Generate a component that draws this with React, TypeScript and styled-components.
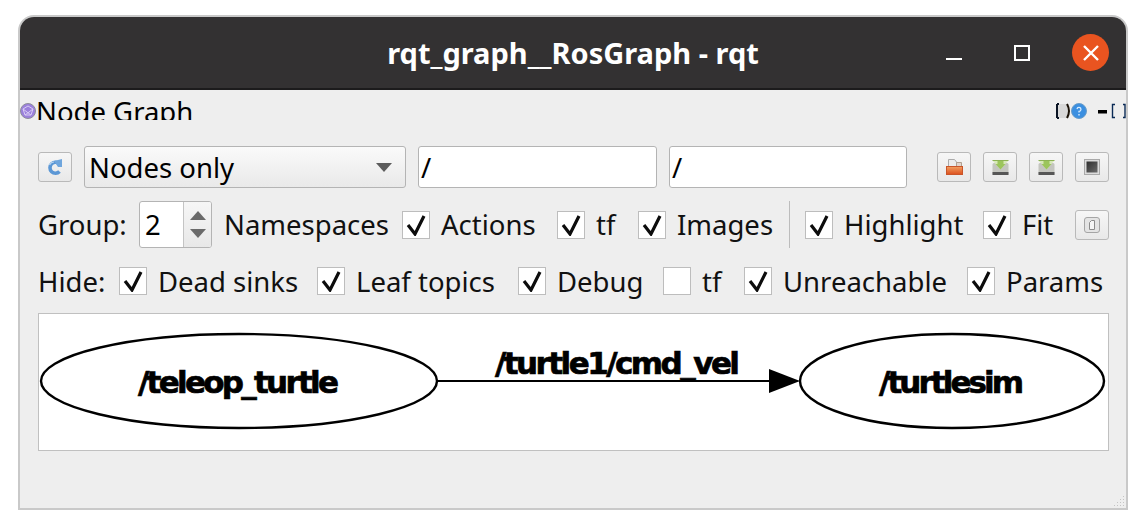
import React from "react";
import styled, { createGlobalStyle } from "styled-components";

const GlobalStyle = createGlobalStyle`
  html, body {
    margin: 0;
    padding: 0;
    background: #fff;
  }
  body {
    width: 1147px;
    height: 528px;
    overflow: hidden;
    font-family: "Noto Sans", "Liberation Sans", sans-serif;
  }
`;

const Page = styled.div`
  padding: 15px 0 0 18px;
`;

const Window = styled.div`
  position: relative;
  width: 1110px;
  height: 495px;
  box-sizing: border-box;
  border: 2px solid #c9c9c9;
  border-radius: 16px 16px 0 0;
  background: #eeeeee;
  overflow: hidden;
  display: flex;
  flex-direction: column;
`;

const TitleBar = styled.div`
  height: 73px;
  flex: none;
  box-sizing: border-box;
  background: #333132;
  border-bottom: 2px solid #1c1b1c;
  display: grid;
  grid-template-columns: 1fr auto 1fr;
  align-items: center;
`;

const Title = styled.div`
  grid-column: 2;
  color: #fff;
  font-size: 29px;
  font-weight: 700;
  white-space: nowrap;
`;

const WindowControls = styled.div`
  grid-column: 3;
  justify-self: end;
  display: flex;
  align-items: center;
  gap: 30px;
  padding-right: 17px;
`;

const MinIcon = styled.div`
  width: 16px;
  height: 2px;
  background: #fff;
  margin: 12px 22px 0 0;
`;

const MaxIcon = styled.div`
  width: 16px;
  height: 16px;
  box-sizing: border-box;
  border: 2px solid #fff;
  margin-right: 12px;
`;

const CloseButton = styled.div`
  width: 37px;
  height: 37px;
  border-radius: 50%;
  background: #e95420;
  display: flex;
  align-items: center;
  justify-content: center;
`;

const DockTitle = styled.div`
  height: 30px;
  flex: none;
  overflow: hidden;
  display: flex;
  align-items: flex-start;
  justify-content: space-between;
  color: #000;
`;

const DockName = styled.div`
  display: flex;
  align-items: flex-start;
  font-size: 27.5px;
  line-height: 38px;
  margin-top: 3px;
  svg {
    margin: 10px 0 0 0;
  }
`;

const DockButtons = styled.div`
  display: flex;
  align-items: center;
  margin-top: 13px;
`;

const Body = styled.div`
  flex: 1;
  padding: 26px 17px 0 18px;
  display: flex;
  flex-direction: column;
`;

const Row = styled.div<{ $h: number; $mt: number }>`
  display: flex;
  align-items: center;
  height: ${(p) => p.$h}px;
  margin-top: ${(p) => p.$mt}px;
  flex: none;
  font-size: 27.5px;
  color: #111;
  white-space: nowrap;
`;

const ToolButton = styled.div<{ $mr?: number }>`
  width: 34px;
  height: 30px;
  flex: none;
  box-sizing: border-box;
  border: 1px solid #b9b9b9;
  border-radius: 3px;
  background: linear-gradient(#f6f6f6, #e8e8e8);
  margin-right: ${(p) => p.$mr ?? 0}px;
  display: flex;
  align-items: center;
  justify-content: center;
`;

const Combo = styled.div`
  width: 322px;
  height: 42px;
  flex: none;
  box-sizing: border-box;
  margin: 0 12px;
  padding: 0 13px 0 4px;
  border: 1px solid #b4b4b4;
  border-radius: 3px;
  background: linear-gradient(#fafafa, #e9e9e9);
  display: flex;
  align-items: center;
  justify-content: space-between;
  color: #000;
`;

const ComboArrow = styled.div`
  width: 0;
  height: 0;
  border-left: 8px solid transparent;
  border-right: 8px solid transparent;
  border-top: 9px solid #5c5c5c;
`;

const TextField = styled.div<{ $w: number; $mr: number }>`
  width: ${(p) => p.$w}px;
  height: 42px;
  flex: none;
  box-sizing: border-box;
  margin-right: ${(p) => p.$mr}px;
  padding-left: 2px;
  border: 1px solid #b4b4b4;
  border-radius: 3px;
  background: #fff;
  color: #000;
  display: flex;
  align-items: center;
`;

const ToolGroup = styled.div`
  display: flex;
  gap: 12px;
`;

const Label = styled.div<{ $w: number }>`
  width: ${(p) => p.$w}px;
  flex: none;
`;

const Spin = styled.div`
  width: 73px;
  height: 47px;
  flex: none;
  box-sizing: border-box;
  margin-right: 12px;
  border: 1px solid #b4b4b4;
  border-radius: 3px;
  background: #fff;
  display: flex;
  overflow: hidden;
`;

const SpinValue = styled.div`
  flex: 1;
  padding-left: 5px;
  line-height: 45px;
  color: #000;
`;

const SpinButtons = styled.div`
  width: 28px;
  box-sizing: border-box;
  border-left: 1px solid #c4c4c4;
  background: linear-gradient(#f6f6f6, #e8e8e8);
  display: flex;
  flex-direction: column;
  align-items: center;
  justify-content: center;
  gap: 9px;
`;

const SpinArrow = styled.div<{ $up?: boolean }>`
  width: 0;
  height: 0;
  border-left: 8px solid transparent;
  border-right: 8px solid transparent;
  ${(p) => (p.$up ? "border-bottom" : "border-top")}: 9px solid #6a6a6a;
`;

const CheckItem = styled.div<{ $w: number }>`
  width: ${(p) => p.$w}px;
  flex: none;
  display: flex;
  align-items: center;
  gap: 11px;
`;

const Box = styled.div`
  width: 28px;
  height: 28px;
  flex: none;
  box-sizing: border-box;
  border: 1px solid #bdbdbd;
  background: #fff;
  display: flex;
  align-items: center;
  justify-content: center;
`;

const Separator = styled.div`
  width: 1px;
  height: 47px;
  flex: none;
  background: #bcbcbc;
  margin-right: 15px;
`;

const GraphView = styled.div`
  height: 138px;
  margin-top: 17px;
  width: 1071px;
  flex: none;
  box-sizing: border-box;
  border: 1px solid #c0c0c0;
  background: #fff;
`;

const GraphText = styled.text`
  font-family: "DejaVu Sans", sans-serif;
  font-weight: 700;
  fill: #000;
  stroke: #000;
  stroke-width: 0.7px;
`;

const SizeGrip = styled.svg`
  position: absolute;
  right: 1px;
  bottom: 1px;
`;

const Check = () => (
  <svg width="20" height="22" viewBox="0 0 20 22">
    <path d="M2 11 L9 20 L18 2" fill="none" stroke="#0c0c0c" strokeWidth="3.2" />
  </svg>
);

const Option = ({ w, label, on = true }: { w: number; label: string; on?: boolean }) => (
  <CheckItem $w={w}>
    <Box>{on && <Check />}</Box>
    <span>{label}</span>
  </CheckItem>
);

const GraphIcon = () => (
  <svg width="16" height="16" viewBox="0 0 16 16">
    <circle cx="8" cy="8" r="7.5" fill="#9b80dc" stroke="#8d8d9a" strokeWidth="1" />
    <path d="M3 6 L8 3 L13 6 L11 12 L5 12 Z M3 6 L11 12 M13 6 L5 12" fill="none" stroke="#d8ccf4" strokeWidth="1" />
  </svg>
);

const RefreshIcon = () => (
  <svg width="18" height="18" viewBox="0 0 18 18">
    <path d="M13.5 6 A5.5 5.5 0 1 0 13.5 13.5" fill="none" stroke="#5b97d5" strokeWidth="3.6" />
    <path d="M8 3 L16 1 L16 9 L12 9 Z" fill="#6fa6dd" />
    <path d="M3.5 7 A5 5 0 0 1 8 4" fill="none" stroke="#b6d4f0" strokeWidth="1.2" />
  </svg>
);

const OpenIcon = () => (
  <svg width="17" height="16" viewBox="0 0 17 16">
    <defs>
      <linearGradient id="folderFill" x1="0" y1="0" x2="0" y2="1">
        <stop offset="0" stopColor="#f2a060" />
        <stop offset="1" stopColor="#dc4f1e" />
      </linearGradient>
    </defs>
    <path d="M2.5 8 V0.5 H8.5 L10.5 3 V8 Z" fill="#ececec" stroke="#ababab" />
    <path d="M10.5 3.5 H15.5 V8 H10.5 Z" fill="#e2d4cc" stroke="#b0a090" />
    <rect x="0.5" y="7.5" width="16" height="8" fill="url(#folderFill)" stroke="#c9552a" />
  </svg>
);

const SaveIcon = () => (
  <svg width="17" height="15" viewBox="0 0 17 15">
    <rect x="0.5" y="3" width="16" height="12" rx="1.5" fill="#c4c5bf" />
    <rect x="0.5" y="12" width="16" height="3" fill="#565656" />
    <path d="M0.5 0.5 H16.5 L8.5 9.5 Z" fill="#d7e8b8" />
    <path d="M0.5 0.5 H16.5" stroke="#8db255" />
    <path d="M5.5 1 V4 H3.5 L8.5 9.5 L13.5 4 H11.5 V1 Z" fill="#9cc55c" />
  </svg>
);

const ScreenIcon = () => (
  <svg width="16" height="16" viewBox="0 0 16 16">
    <defs>
      <linearGradient id="screenFill" x1="0" y1="0" x2="1" y2="1">
        <stop offset="0" stopColor="#2f2f2f" />
        <stop offset="1" stopColor="#6b6b6b" />
      </linearGradient>
    </defs>
    <rect x="0.5" y="0.5" width="15" height="15" fill="#dcdcdc" stroke="#a9a9a9" />
    <rect x="2.5" y="2.5" width="11" height="11" fill="url(#screenFill)" />
  </svg>
);

const FitIcon = () => (
  <svg width="16" height="16" viewBox="0 0 16 16">
    <rect x="0.5" y="0.5" width="15" height="15" rx="2.5" fill="#e4e4e4" stroke="#a5a5a5" />
    <path d="M5.5 5.5 L7.5 3.5 H10.5 V12.5 H5.5 Z" fill="#f6f6f6" stroke="#8c8c8c" />
  </svg>
);

const HelpIcon = () => (
  <svg width="16" height="16" viewBox="0 0 16 16">
    <circle cx="8" cy="8" r="7.5" fill="#3b8fe0" stroke="#6a9cc8" />
    <path d="M6 6 A2 2 0 1 1 8 8.4 V9.6" fill="none" stroke="#d8ecff" strokeWidth="1.3" />
    <rect x="7.3" y="11" width="1.4" height="1.5" fill="#d8ecff" />
  </svg>
);

const DockStub = () => (
  <svg width="15" height="16" viewBox="0 0 15 16">
    <rect x="1" y="1" width="12" height="14" fill="#d8d8d8" />
    <path d="M1 1 V15 M1 1 H3 M1 15 H3" fill="none" stroke="#0b1424" strokeWidth="2" />
    <path d="M11 1 Q15 8 11 15" fill="none" stroke="#1a1208" strokeWidth="2" />
  </svg>
);

const FloatStub = () => (
  <svg width="29" height="16" viewBox="0 0 29 16" style={{ marginLeft: 10 }}>
    <rect x="1" y="7" width="9" height="3.5" fill="#000" />
    <path d="M18 1.5 H15.5 V14.5 H18 M26 1.5 H28 V14.5 H26" fill="none" stroke="#0a2a55" strokeWidth="1.4" />
  </svg>
);

const Graph = () => (
  <svg width="1069" height="136" viewBox="39 314 1069 136">
    <ellipse cx="239" cy="381" rx="198" ry="47" fill="none" stroke="#000" strokeWidth="2.4" />
    <ellipse cx="952" cy="381" rx="152" ry="47" fill="none" stroke="#000" strokeWidth="2.4" />
    <path d="M438 381 H770" stroke="#000" strokeWidth="2.2" />
    <path d="M769 369 L800 381 L769 393 Z" fill="#000" />
    <GraphText x="138" y="393" fontSize="31" textLength="201" lengthAdjust="spacing">/teleop_turtle</GraphText>
    <GraphText x="495" y="374" fontSize="31" textLength="245" lengthAdjust="spacing">/turtle1/cmd_vel</GraphText>
    <GraphText x="879" y="393" fontSize="31" textLength="145" lengthAdjust="spacing">/turtlesim</GraphText>
  </svg>
);

const gripDots = [
  [9, 0], [6, 3], [9, 3], [3, 6], [6, 6], [9, 6], [0, 9], [3, 9], [6, 9], [9, 9],
];

export default function App() {
  return (
    <Page>
      <GlobalStyle />
      <Window>
        <TitleBar>
          <Title>rqt_graph__RosGraph - rqt</Title>
          <WindowControls>
            <MinIcon />
            <MaxIcon />
            <CloseButton>
              <svg width="18" height="18" viewBox="0 0 18 18">
                <path d="M2 2 L16 16 M16 2 L2 16" stroke="#fff" strokeWidth="2.4" />
              </svg>
            </CloseButton>
          </WindowControls>
        </TitleBar>
        <DockTitle>
          <DockName>
            <GraphIcon />
            Node Graph
          </DockName>
          <DockButtons>
            <DockStub />
            <HelpIcon />
            <FloatStub />
          </DockButtons>
        </DockTitle>
        <Body>
          <Row $h={42} $mt={0}>
            <ToolButton>
              <RefreshIcon />
            </ToolButton>
            <Combo>
              Nodes only
              <ComboArrow />
            </Combo>
            <TextField $w={239} $mr={12}>/</TextField>
            <TextField $w={238} $mr={30}>/</TextField>
            <ToolGroup>
              <ToolButton><OpenIcon /></ToolButton>
              <ToolButton><SaveIcon /></ToolButton>
              <ToolButton><SaveIcon /></ToolButton>
              <ToolButton><ScreenIcon /></ToolButton>
            </ToolGroup>
          </Row>
          <Row $h={47} $mt={13}>
            <Label $w={101}>Group:</Label>
            <Spin>
              <SpinValue>2</SpinValue>
              <SpinButtons>
                <SpinArrow $up />
                <SpinArrow />
              </SpinButtons>
            </Spin>
            <Label $w={178}>Namespaces</Label>
            <Option w={155} label="Actions" />
            <Option w={81} label="tf" />
            <Option w={151} label="Images" />
            <Separator />
            <Option w={178} label="Highlight" />
            <Option w={92} label="Fit" />
            <ToolButton><FitIcon /></ToolButton>
          </Row>
          <Row $h={30} $mt={18}>
            <Label $w={81}>Hide:</Label>
            <Option w={198} label="Dead sinks" />
            <Option w={201} label="Leaf topics" />
            <Option w={145} label="Debug" />
            <Option w={81} label="tf" on={false} />
            <Option w={223} label="Unreachable" />
            <Option w={120} label="Params" />
          </Row>
          <GraphView>
            <Graph />
          </GraphView>
        </Body>
        <SizeGrip width="11" height="11" viewBox="0 0 11 11">
          {gripDots.map(([x, y]) => (
            <rect key={`${x}-${y}`} x={x} y={y} width="1" height="1" fill="#c4c4c4" />
          ))}
        </SizeGrip>
      </Window>
    </Page>
  );
}
